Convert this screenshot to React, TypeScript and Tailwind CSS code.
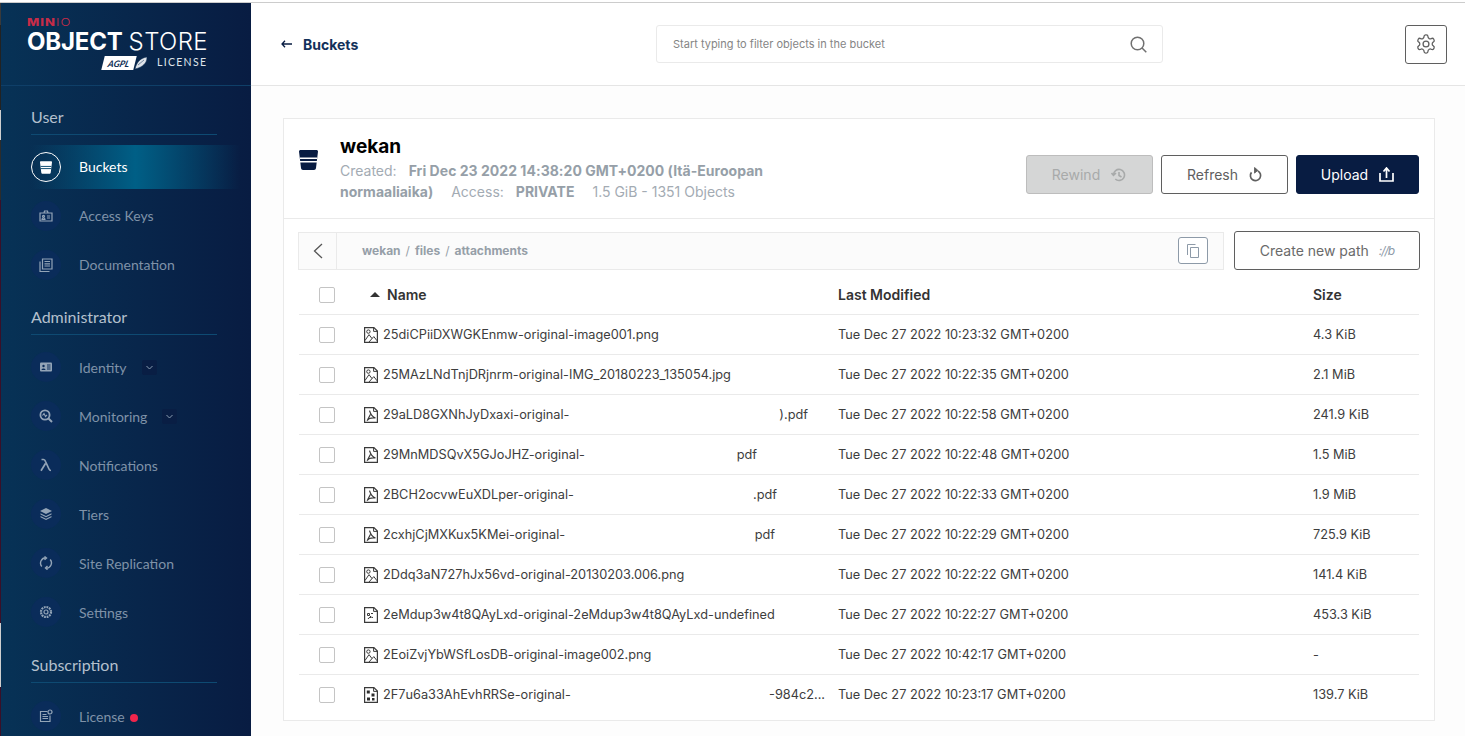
import React from "react";

const inter = "font-['Inter',sans-serif]";
const lato = "font-['Lato',sans-serif]";

type FileKind = "image" | "pdf" | "file" | "dice";

function FileIcon({ kind }: { kind: FileKind }) {
  return (
    <svg width="14" height="16" viewBox="0 0 14 16" fill="none" className="shrink-0">
      <path d="M.6.6h9.3l3.5 3.5v11.3H.6z" stroke="#3a3a3a" strokeWidth="1.2" />
      <path d="M9.6.8v3.6h3.6" stroke="#3a3a3a" strokeWidth="1" />
      {kind === "image" && (
        <>
          <circle cx="4.4" cy="4.6" r="1.7" stroke="#3a3a3a" strokeWidth="1" />
          <path d="M1 13.5 5 7.6l3 4 1.8-2 3.3 4.2M5 15l3-3.4" stroke="#3a3a3a" strokeWidth="1" />
        </>
      )}
      {kind === "pdf" && (
        <path d="M5.500 3.600c1 3.400 2 6 6 7.400-3.500-.400-7 .400-8.500 2.600M6.400 7.500 3.500 13" stroke="#3a3a3a" strokeWidth="1.200" />
      )}
      {kind === "file" && (
        <path d="M3.500 6.500h2v2h-2zM7 6.500h2M4 12c1-2 3-2 5-1.500M6.500 9v2" stroke="#3a3a3a" strokeWidth="1" />
      )}
      {kind === "dice" && (
        <g fill="#2c2c2c">
          <rect x="2.800" y="3.500" width="3" height="3" />
          <rect x="7.500" y="6.500" width="3" height="3" />
          <rect x="3" y="10.500" width="3" height="3" />
          <rect x="8" y="11" width="2.500" height="2.500" />
        </g>
      )}
    </svg>
  );
}

function BucketGlyph({ className, stripe }: { className: string; stripe: string }) {
  return (
    <svg viewBox="0 0 19 20" className={className}>
      <path d="M0 1.500C0 .700.700 0 1.500 0h16c.800 0 1.500.700 1.500 1.500L17 18c-.100 1.100-1 2-2 2H4c-1 0-1.900-.900-2-2z" fill="currentColor" />
      <rect x="1" y="7.500" width="17" height="1.500" fill={stripe} />
      <rect x="1" y="11" width="17" height="1.500" fill={stripe} />
    </svg>
  );
}

const stroke = { fill: "none", stroke: "currentColor", strokeWidth: 1.2 };

const icons: Record<string, React.ReactNode> = {
  keys: (
    <svg viewBox="0 0 14 14" className="h-[14px] w-[14px]" {...stroke}>
      <path d="M1 4h12v8H1zM5 4l.5-2h3L9 4" />
      <path d="M3 10.500c0-2 3-2 3 0zM8 7h3M8 9h3" />
      <circle cx="4.500" cy="7.300" r="1" />
    </svg>
  ),
  docs: (
    <svg viewBox="0 0 14 14" className="h-[14px] w-[14px]" {...stroke}>
      <path d="M3.500 1h9.500v10H3.500zM1 3.500V13.500h9.500" />
      <path d="M5.500 3.500H11M5.500 5.800H11M5.500 8H11" />
    </svg>
  ),
  identity: (
    <svg viewBox="0 0 14 14" className="h-[14px] w-[14px]">
      <rect x="1" y="2.500" width="12" height="9" rx="1" fill="currentColor" />
      <path d="M8 5h3.500M8 7h3.500M8 9h3.500" stroke="#0a2c5a" strokeWidth="1" />
      <circle cx="4.500" cy="6" r="1.200" fill="#0a2c5a" />
      <path d="M2.500 10c0-2 4-2 4 0z" fill="#0a2c5a" />
    </svg>
  ),
  monitoring: (
    <svg viewBox="0 0 14 14" className="h-[14px] w-[14px]" fill="none" stroke="currentColor" strokeWidth="1.800">
      <circle cx="6" cy="6" r="4.600" />
      <path d="m9.500 9.500 3.500 3.500" strokeWidth="2" />
      <path d="M3.500 6.500l1.500-2 1.500 3 1.500-1.500" strokeWidth="1.100" />
    </svg>
  ),
  lambda: (
    <svg viewBox="0 0 14 14" className="h-[14px] w-[14px]" fill="none" stroke="currentColor" strokeWidth="1.700">
      <path d="M2.500 1.500h2c1 0 1.500.500 2 2L10 11c.400 1 .800 1.500 2 1.500M6.500 5.500 2 12.800" />
    </svg>
  ),
  tiers: (
    <svg viewBox="0 0 14 14" className="h-[14px] w-[14px]" fill="currentColor">
      <path d="M7 1 13 4 7 7 1 4z" />
      <path d="M1.500 6.300 7 9l5.500-2.700v1.200L7 10.300 1.500 7.500zM1.500 9 7 11.800 12.500 9v1.200L7 13l-5.500-2.800z" />
    </svg>
  ),
  replication: (
    <svg viewBox="0 0 14 14" className="h-[14px] w-[14px]" fill="none" stroke="currentColor" strokeWidth="1.400">
      <path d="M2.800 10.500A5.300 5.300 0 0 1 7 1.800M11.200 3.500A5.300 5.300 0 0 1 7 12.200" />
      <path d="m5.500.5 2 1.500-2 1.800M8.500 10l-2 2 2 1.700" />
    </svg>
  ),
  settings: (
    <svg viewBox="0 0 14 14" className="h-[14px] w-[14px]" {...stroke}>
      <circle cx="7" cy="7" r="2" />
      <circle cx="7" cy="7" r="5" strokeWidth="2.200" strokeDasharray="1.800 .800" />
    </svg>
  ),
  license: (
    <svg viewBox="0 0 14 14" className="h-[14px] w-[14px]" {...stroke}>
      <path d="M8.500 2.500H1.500v10h9.500V6.500M3.500 5.500h4M3.500 7.500h5.500M3.500 9.500h5.500" />
      <circle cx="11" cy="3" r="2" />
    </svg>
  ),
};

function NavItem({ label, icon, caret, dot, lift }: { label: string; icon: string; caret?: boolean; dot?: boolean; lift?: boolean }) {
  return (
    <div className="flex h-[44px] items-center pl-[30px]">
      <div className="flex h-[30px] w-[30px] items-center justify-center rounded-full bg-[#0a2c5a] text-[#93a4b7]">
        {icons[icon]}
      </div>
      <span className={`ml-[18px] text-[14px] text-[#7f92a8] ${lift ? "pb-[2px]" : ""}`}>{label}</span>
      {caret && (
        <span className="ml-[15px] mt-[1px] flex h-[15px] w-[15px] items-center justify-center rounded-[2px] bg-[#091e44]">
          <svg width="7" height="5" viewBox="0 0 7 5" fill="none" stroke="#8a9cb0">
            <path d="m.5 1 3 3 3-3" />
          </svg>
        </span>
      )}
      {dot && <span className="ml-[5px] mt-[3px] h-[8px] w-[8px] rounded-full bg-[#f0254c]" />}
    </div>
  );
}

function SectionTitle({ children, loose }: { children: React.ReactNode; loose?: boolean }) {
  return (
    <div
      className={`ml-[30px] flex h-[31px] w-[186px] items-center border-b border-[#0e4a72] pb-[4px] text-[16px] text-[#b4c0cd] ${loose ? "mb-[11px]" : "mb-[10px]"}`}
    >
      {children}
    </div>
  );
}

function Sidebar() {
  return (
    <aside className={`${lato} flex w-[250px] shrink-0 flex-col bg-gradient-to-r from-[#073256] to-[#081c42]`}>
      <div className="h-[83px] shrink-0 border-b border-[#0f3f68] pl-[26px] pt-[14px]">
        <div className={`${inter} flex h-[10px] origin-left scale-x-[1.3] items-center text-[10px] leading-none tracking-[0.8px] text-[#c72c48]`}>
          <span className="font-extrabold">MIN</span>
          <span className="font-light">IO</span>
        </div>
        <div className={`${inter} mt-[2px] flex h-[25px] items-center text-[24px] leading-none text-white`}>
          <span className="font-bold tracking-[-0.2px]">OBJECT</span>
          <span className="ml-[6px] font-light tracking-[0.4px]">STORE</span>
        </div>
        <div className="mt-[1px] flex items-center">
          <span className="ml-[76px] flex h-[14px] w-[32px] skew-x-[-14deg] items-center justify-center bg-white text-[9px] font-bold italic leading-none text-[#0a2c53]">
            AGPL
          </span>
          <svg width="14" height="14" viewBox="0 0 14 14" className="ml-[-1px]" fill="#dfe4ea" stroke="#0a2c53" strokeWidth=".5">
            <path d="M1 13C3 5 7 2 13 1c0 6-4 10-12 12zM4 9l6-5" />
          </svg>
          <span className="ml-[9px] text-[10.500px] tracking-[1.300px] text-[#dfe4ea]">LICENSE</span>
        </div>
      </div>
      <div className="mt-[18px]">
        <SectionTitle>User</SectionTitle>
        <div className="flex flex-col gap-[5px]">
          <div className="ml-[30px] mr-[11px] flex h-[44px] items-center bg-gradient-to-r from-transparent via-[#005f86] to-transparent">
            <div className="flex h-[30px] w-[30px] items-center justify-center rounded-full border border-white text-white">
              <BucketGlyph className="h-[13px] w-[12px]" stripe="#07486e" />
            </div>
            <span className="ml-[18px] pb-[2px] text-[14px] text-white">Buckets</span>
          </div>
          <NavItem label="Access Keys" icon="keys" lift />
          <NavItem label="Documentation" icon="docs" lift />
        </div>
      </div>
      <div className="mt-[17px]">
        <SectionTitle>Administrator</SectionTitle>
        <div className="flex flex-col gap-[5px]">
          <NavItem label="Identity" icon="identity" caret />
          <NavItem label="Monitoring" icon="monitoring" caret />
          <NavItem label="Notifications" icon="lambda" />
          <NavItem label="Tiers" icon="tiers" />
          <NavItem label="Site Replication" icon="replication" />
          <NavItem label="Settings" icon="settings" />
        </div>
      </div>
      <div className="mt-[18px]">
        <SectionTitle loose>Subscription</SectionTitle>
        <NavItem label="License" icon="license" dot />
      </div>
    </aside>
  );
}

function TopBar() {
  return (
    <header className="flex h-[83px] shrink-0 items-center border-b border-[#e5e5e5] bg-white pl-[30px]">
      <div className="flex w-[375px] items-center">
        <svg width="11" height="8" viewBox="0 0 11 8" fill="none" stroke="#081c42" strokeWidth="1.300">
          <path d="M11 4H1M4 .7 1 4l3 3.300" />
        </svg>
        <span className="ml-[11px] text-[14px] font-bold text-[#12305a]">Buckets</span>
      </div>
      <div className="flex h-[38px] w-[507px] items-center justify-between rounded-[3px] border border-[#eaeaea] pl-[16px] pr-[15px]">
        <span className="text-[11px] text-[#858585]">Start typing to filter objects in the bucket</span>
        <svg width="17" height="17" viewBox="0 0 17 17" fill="none" stroke="#707070" strokeWidth="1.500">
          <circle cx="7.500" cy="7.500" r="6.300" />
          <path d="m12 12 4.300 4.300" />
        </svg>
      </div>
      <button className="ml-[242px] flex h-[39px] w-[42px] items-center justify-center rounded-[3px] border border-[#5f5f5f] text-[#5f5f5f]">
        <svg width="22" height="22" viewBox="0 0 24 24" fill="none" stroke="currentColor" strokeWidth="1.400">
          <path d="M12.200 2h-.400a2 2 0 0 0-2 2v.200a2 2 0 0 1-1 1.700l-.400.300a2 2 0 0 1-2 0l-.200-.100a2 2 0 0 0-2.700.700l-.200.400a2 2 0 0 0 .700 2.700l.200.100a2 2 0 0 1 1 1.700v.500a2 2 0 0 1-1 1.700l-.200.100a2 2 0 0 0-.700 2.700l.200.400a2 2 0 0 0 2.700.700l.200-.100a2 2 0 0 1 2 0l.400.300a2 2 0 0 1 1 1.700v.200a2 2 0 0 0 2 2h.400a2 2 0 0 0 2-2v-.200a2 2 0 0 1 1-1.700l.400-.300a2 2 0 0 1 2 0l.200.100a2 2 0 0 0 2.700-.700l.200-.400a2 2 0 0 0-.700-2.700l-.200-.100a2 2 0 0 1-1-1.700v-.500a2 2 0 0 1 1-1.700l.200-.100a2 2 0 0 0 .700-2.700l-.200-.400a2 2 0 0 0-2.700-.700l-.200.100a2 2 0 0 1-2 0l-.400-.300a2 2 0 0 1-1-1.700V4a2 2 0 0 0-2-2z" />
          <circle cx="12" cy="12" r="3.200" />
        </svg>
      </button>
    </header>
  );
}

function ActionButton({ label, tone, width, children }: { label: string; tone: "off" | "line" | "solid"; width: string; children: React.ReactNode }) {
  const styles = {
    off: "border-[#bdbdbd] bg-[#d5d6d6] text-[#a8aaaa]",
    line: "border-[#5f5f5f] bg-white text-[#5f5f5f]",
    solid: "border-[#081c42] bg-[#081c42] text-white",
  };
  return (
    <button className={`flex h-[39px] items-center justify-center gap-[11px] rounded-[3px] border text-[14px] ${width} ${styles[tone]}`}>
      {label}
      {children}
    </button>
  );
}

const rows: { kind: FileKind; name: string; width?: number; tail?: string; date: string; size: string }[] = [
  { kind: "image", name: "25diCPiiDXWGKEnmw-original-image001.png", date: "10:23:32", size: "4.3 KiB" },
  { kind: "image", name: "25MAzLNdTnjDRjnrm-original-IMG_20180223_135054.jpg", date: "10:22:35", size: "2.1 MiB" },
  { kind: "pdf", name: "29aLD8GXNhJyDxaxi-original-", width: 425, tail: ").pdf", date: "10:22:58", size: "241.9 KiB" },
  { kind: "pdf", name: "29MnMDSQvX5GJoJHZ-original-", width: 374, tail: "pdf", date: "10:22:48", size: "1.5 MiB" },
  { kind: "pdf", name: "2BCH2ocvwEuXDLper-original-", width: 394, tail: ".pdf", date: "10:22:33", size: "1.9 MiB" },
  { kind: "pdf", name: "2cxhjCjMXKux5KMei-original-", width: 392, tail: "pdf", date: "10:22:29", size: "725.9 KiB" },
  { kind: "image", name: "2Ddq3aN727hJx56vd-original-20130203.006.png", date: "10:22:22", size: "141.4 KiB" },
  { kind: "file", name: "2eMdup3w4t8QAyLxd-original-2eMdup3w4t8QAyLxd-undefined", date: "10:22:27", size: "453.3 KiB" },
  { kind: "image", name: "2EoiZvjYbWSfLosDB-original-image002.png", date: "10:42:17", size: "-" },
  { kind: "dice", name: "2F7u6a33AhEvhRRSe-original-", width: 442, tail: "-984c2...", date: "10:23:17", size: "139.7 KiB" },
];

const gridCols = "grid grid-cols-[65px_474px_475px_1fr] items-center";

function Checkbox() {
  return <span className="ml-[20px] block h-[16px] w-[16px] rounded-[2px] border border-[#c4c4c4] bg-white" />;
}

function BucketCard() {
  return (
    <section className="flex h-[603px] flex-col border border-[#eaeaea] bg-white">
      <div className="flex h-[100px] shrink-0 items-center border-b border-[#eaeaea] pl-[15px] pr-[15px]">
        <div className="mb-[18px] mr-[22px] text-[#081c42]">
          <BucketGlyph className="h-[20px] w-[19px]" stripe="#fff" />
        </div>
        <div className="w-[440px] self-start pt-[15px]">
          <h1 className="text-[19px] font-bold leading-[25px] text-black">wekan</h1>
          <div className="mt-[1px] text-[14px] leading-[21px] text-[#a3abb3]">
            <div className="flex gap-[12px] whitespace-nowrap">
              <span>Created:</span>
              <b className="font-bold tracking-[0.03px] text-[#969fa8]">Fri Dec 23 2022 14:38:20 GMT+0200 (Itä-Euroopan</b>
            </div>
            <div className="flex whitespace-nowrap">
              <b className="font-bold text-[#969fa8]">normaaliaika)</b>
              <span className="ml-[18px]">Access:</span>
              <b className="ml-[12px] font-bold text-[#969fa8]">PRIVATE</b>
              <span className="ml-[18px]">1.5 GiB - 1351 Objects</span>
            </div>
          </div>
        </div>
        <div className="ml-auto mt-[12px] flex gap-[8px]">
          <ActionButton label="Rewind" tone="off" width="w-[127px]">
            <svg width="16" height="16" viewBox="0 0 16 16" fill="none" stroke="currentColor" strokeWidth="1.600">
              <path d="M2.500 8a5.500 5.500 0 1 1 1.800 4M.5 6l2 2.300L5 6M8 5v3.500l2.500 1.500" />
            </svg>
          </ActionButton>
          <ActionButton label="Refresh" tone="line" width="w-[127px]">
            <svg width="13" height="15" viewBox="0 0 14 16" fill="none" stroke="currentColor" strokeWidth="1.800">
              <path d="M9.500 4.200A5.500 5.500 0 1 1 2.700 5.700" />
              <path d="M6 .5v6l3.500-3z" fill="currentColor" strokeWidth="1" />
            </svg>
          </ActionButton>
          <ActionButton label="Upload" tone="solid" width="w-[123px]">
            <svg width="15" height="15" viewBox="0 0 15 15" fill="none" stroke="currentColor" strokeWidth="1.700">
              <path d="M1 6v8h13V6M7.500 11V1.500M4.500 4.500l3-3.500 3 3.500" />
            </svg>
          </ActionButton>
        </div>
      </div>

      <div className="mt-[12px] flex h-[39px] shrink-0 items-center pl-[14px] pr-[14px]">
        <div className="flex h-[38px] w-[926px] items-center border border-[#eaeaea] bg-[#fbfbfb]">
          <div className="flex h-full w-[38px] items-center justify-center border-r border-[#eaeaea]">
            <svg width="10" height="16" viewBox="0 0 10 16" fill="none" stroke="#555" strokeWidth="1.300">
              <path d="M9 1 1.500 8 9 15" />
            </svg>
          </div>
          <span className="ml-[25px] text-[12px] font-bold text-[#969fa8]">
            wekan<span className="mx-[5px] font-normal">/</span>files<span className="mx-[5px] font-normal">/</span>attachments
          </span>
          <span className="ml-auto mr-[15px] flex h-[27px] w-[30px] items-center justify-center rounded-[3px] border border-[#8d9aa8] bg-white">
            <svg width="12" height="14" viewBox="0 0 12 14" fill="none" stroke="#8d9aa8">
              <path d="M3.500 3.500h8v10h-8zM.5 11V.5h8" />
            </svg>
          </span>
        </div>
        <button className="ml-[10px] flex h-[39px] w-[186px] items-center justify-center gap-[10px] rounded-[3px] border border-[#5f5f5f] text-[14px] text-[#6a6a6a]">
          Create new path
          <span className="text-[12px] italic tracking-[-1px] text-[#8d9aa8]">://b</span>
        </button>
      </div>

      <div className="mx-[15px] flex min-h-0 flex-1 flex-col">
        <div className={`${gridCols} mt-[5px] h-[40px] shrink-0 border-b border-[#eaeaea] text-[14px] font-semibold text-[#333]`}>
          <Checkbox />
          <div className="flex items-center pl-[6px]">
            <svg width="10" height="5" viewBox="0 0 10 5" fill="#333">
              <path d="M5 0 10 5H0z" />
            </svg>
            <span className="ml-[7px]">Name</span>
          </div>
          <span>Last Modified</span>
          <span>Size</span>
        </div>
        {rows.map((row, i) => (
          <div
            key={row.name}
            className={`${gridCols} h-[40px] shrink-0 text-[12.750px] text-[#3d3d3d] ${i < rows.length - 1 ? "border-b border-[#eaeaea]" : ""}`}
          >
            <Checkbox />
            <div className="flex items-center gap-[5px] whitespace-nowrap">
              <FileIcon kind={row.kind} />
              {row.tail ? (
                <div className="flex" style={{ width: row.width }}>
                  <span className="flex-1">{row.name}</span>
                  <span>{row.tail}</span>
                </div>
              ) : (
                <span>{row.name}</span>
              )}
            </div>
            <span>Tue Dec 27 2022 {row.date} GMT+0200</span>
            <span>{row.size}</span>
          </div>
        ))}
      </div>
    </section>
  );
}

// the desktop behind the window shows through this 1px column
function WindowEdge() {
  return (
    <div className="flex w-px shrink-0 flex-col bg-[#3a1028]">
      <div className="h-[22px] bg-[#3a3a3a]" />
      <div className="h-[85px] bg-[#222222]" />
      <div className="h-[30px] bg-[#cfcfcf]" />
      <div className="h-[60px] bg-[#2c2c2c]" />
      <div className="h-[423px] bg-[#3a1028]" />
      <div className="h-[64px] bg-[#cfcfcf]" />
    </div>
  );
}

export default function App() {
  return (
    <div className={`${inter} h-screen w-full overflow-hidden bg-white`}>
      <div className="h-[3px] border-b border-[#cccccc]" />
      <div className="flex h-[733px]">
        <WindowEdge />
        <Sidebar />
        <main className="flex min-w-0 flex-1 flex-col bg-[#fdfdfd]">
          <TopBar />
          <div className="pl-[32px] pr-[30px] pt-[32px]">
            <BucketCard />
          </div>
        </main>
      </div>
    </div>
  );
}
